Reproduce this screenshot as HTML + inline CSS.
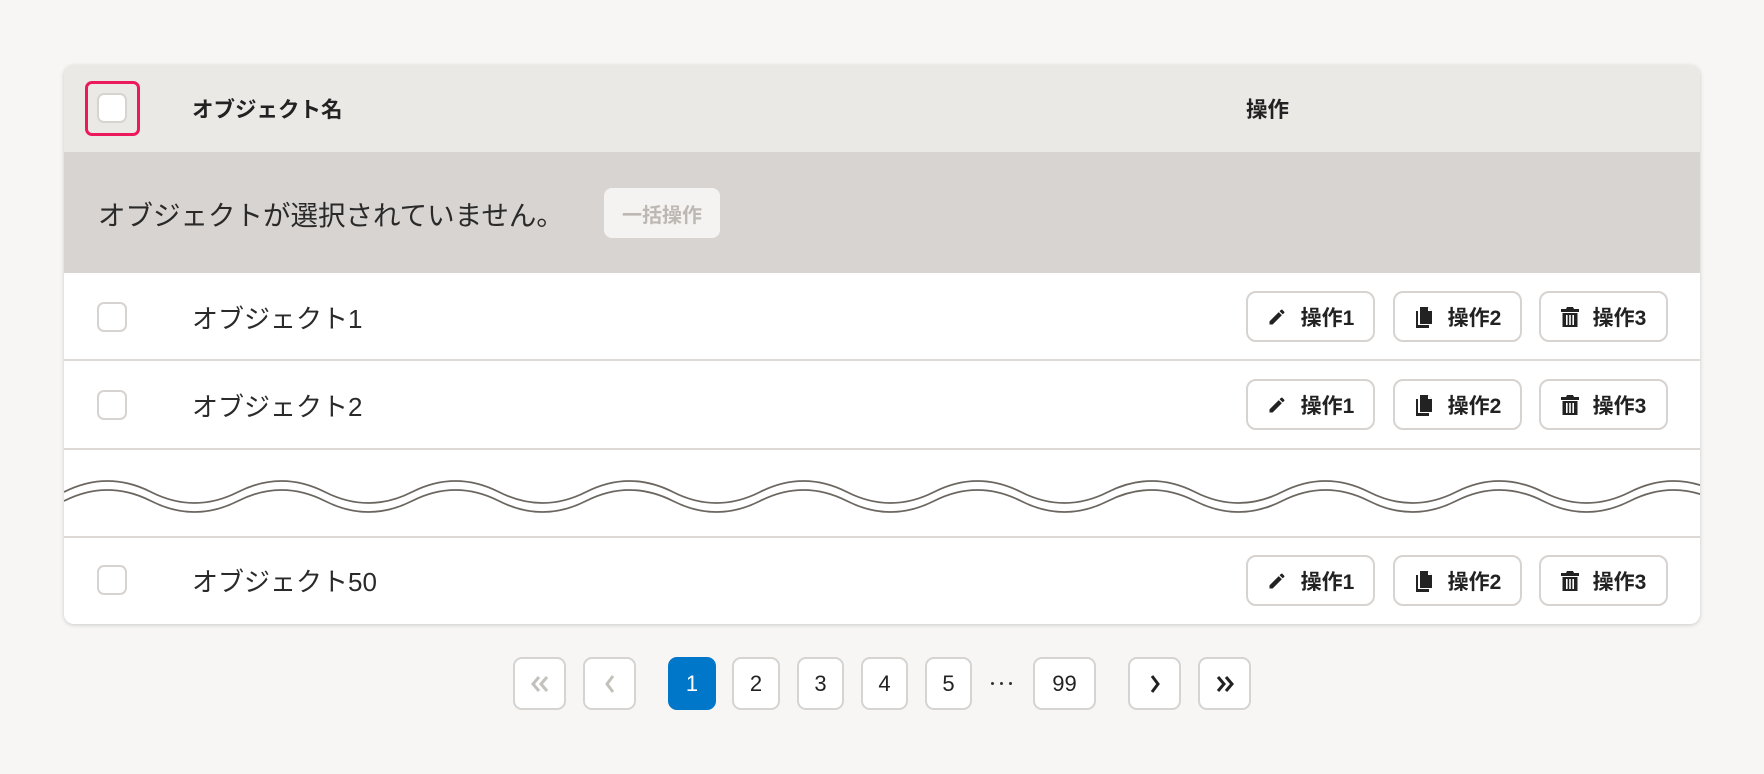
<!DOCTYPE html>
<html><head><meta charset="utf-8"><style>
*{box-sizing:border-box;margin:0;padding:0}
body{width:1764px;height:774px;background:#f7f6f4;font-family:"Liberation Sans","Noto Sans CJK JP",sans-serif;color:#222;position:relative;overflow:hidden}
.card{position:absolute;left:64px;top:65px;width:1636px;height:559px;background:#fff;border-radius:10px;box-shadow:0 1px 4px rgba(0,0,0,.18);overflow:hidden}
.abs{position:absolute}
.hdr{left:0;top:0;width:100%;height:87px;background:#ebe9e6}
.cb{position:absolute;width:30px;height:30px;border:2px solid #d6d3d0;border-radius:7px;background:#fff}
.focus{position:absolute;left:21px;top:16px;width:55px;height:55px;border:3px solid #ec1a5c;border-radius:7px}
.bar{left:0;top:87px;width:100%;height:121px;background:#d8d4d1}
.row{left:0;width:100%;border-bottom:2px solid #dcd9d6}
.txt{position:absolute;left:128px;font-size:26px;color:#2a2a2a}
.btn{position:absolute;height:51px;width:129px;border:2px solid #d6d3d0;border-radius:10px;background:#fff;display:flex;align-items:center;justify-content:center;gap:14px;font-weight:bold;font-size:21px;color:#222}
.pg{position:absolute;top:657px;height:53px;border:2px solid #d6d3d0;border-radius:9px;background:#fff;display:flex;align-items:center;justify-content:center;font-size:22px;color:#222}
</style></head><body>
<div class="card">
  <div class="abs hdr">
    <div class="focus"></div>
    <div class="cb" style="left:33px;top:28px"></div>
    <div class="abs" style="left:128px;top:28px;font-size:21.5px;font-weight:bold">オブジェクト名</div>
    <div class="abs" style="left:1182px;top:28px;font-size:21.5px;font-weight:bold">操作</div>
  </div>
  <div class="abs bar">
    <div class="abs" style="left:34px;top:41px;font-size:27.5px;color:#2a2a2a">オブジェクトが選択されていません。</div>
    <div class="abs" style="left:540px;top:36px;width:116px;height:50px;background:#f5f3f1;border-radius:8px;color:#bdb8b3;font-weight:bold;font-size:20px;display:flex;align-items:center;justify-content:center">一括操作</div>
  </div>
  <div class="abs row" style="top:208px;height:88px"></div>
  <div class="abs row" style="top:296px;height:89px"></div>
  <div class="abs row" style="top:385px;height:88px"></div>
  <svg class="abs" style="left:0;top:385px" width="1636" height="88" viewBox="0 0 1636 88">
    <path d="M0,42 q43.5,-22 87,0 t87,0 t87,0 t87,0 t87,0 t87,0 t87,0 t87,0 t87,0 t87,0 t87,0 t87,0 t87,0 t87,0 t87,0 t87,0 t87,0 t87,0 t87,0" fill="none" stroke="#6b6660" stroke-width="1.8"/>
    <path d="M0,51 q43.5,-22 87,0 t87,0 t87,0 t87,0 t87,0 t87,0 t87,0 t87,0 t87,0 t87,0 t87,0 t87,0 t87,0 t87,0 t87,0 t87,0 t87,0 t87,0 t87,0" fill="none" stroke="#6b6660" stroke-width="1.8"/>
  </svg>
  <div class="cb" style="left:33px;top:237px"></div>
  <div class="txt" style="top:234px">オブジェクト1</div>
  <div class="cb" style="left:33px;top:325px"></div>
  <div class="txt" style="top:322px">オブジェクト2</div>
  <div class="cb" style="left:33px;top:500px"></div>
  <div class="txt" style="top:497px">オブジェクト50</div>
</div>
<div id="btns"></div>
<script>
var tops=[291,379,555],h='';
var pen='<svg width="20" height="20" viewBox="0 0 24 24"><path d="M3 17.25V21h3.75L17.8 9.94l-3.75-3.75L3 17.25zM20.7 7.04a1 1 0 000-1.41l-2.34-2.34a1 1 0 00-1.41 0l-1.83 1.83 3.75 3.75 1.83-1.83z" fill="#222"/></svg>';
var copy='<svg width="20" height="22" viewBox="0 0 20 22"><path d="M2 5h2v14h11v3H2z" fill="#222"/><path d="M6 1h8l4 4v13H6z" fill="#222"/><path d="M14 1v4h4" fill="#fff"/></svg>';
var trash='<svg width="18" height="20" viewBox="0 0 18 20"><path d="M0 2h5l1-2h6l1 2h5v3H0z" fill="#222"/><path d="M1.5 6h15v14h-15z" fill="#222"/><path d="M5 8h1.6v10H5zM8.2 8h1.6v10H8.2zM11.4 8h1.6v10h-1.6z" fill="#fff"/></svg>';
tops.forEach(function(t){
 h+='<div class="btn" style="left:1246px;top:'+t+'px">'+pen+'<span>操作1</span></div>';
 h+='<div class="btn" style="left:1393px;top:'+t+'px">'+copy+'<span>操作2</span></div>';
 h+='<div class="btn" style="left:1539px;top:'+t+'px">'+trash+'<span>操作3</span></div>';
});
document.getElementById('btns').innerHTML=h;
</script>
<div class="pg" style="left:513px;width:53px"><svg width="20" height="18" viewBox="0 0 20 18"><path d="M9 2L3 9l6 7M17 2l-6 7 6 7" stroke="#c4c0bb" stroke-width="3" fill="none"/></svg></div>
<div class="pg" style="left:583px;width:53px"><svg width="12" height="20" viewBox="0 0 12 20"><path d="M9 2L3 10l6 8" stroke="#c4c0bb" stroke-width="3" fill="none"/></svg></div>
<div class="pg" style="left:668px;width:48px;background:#0077c8;border-color:#0077c8;color:#fff">1</div>
<div class="pg" style="left:732px;width:48px">2</div>
<div class="pg" style="left:797px;width:47px">3</div>
<div class="pg" style="left:861px;width:47px">4</div>
<div class="pg" style="left:925px;width:47px">5</div>
<div class="abs" style="left:991px;top:682px;width:30px;height:6px;display:flex;gap:6px"><i style="width:3px;height:3px;border-radius:2px;background:#333"></i><i style="width:3px;height:3px;border-radius:2px;background:#333"></i><i style="width:3px;height:3px;border-radius:2px;background:#333"></i></div>
<div class="pg" style="left:1033px;width:63px">99</div>
<div class="pg" style="left:1128px;width:53px"><svg width="12" height="20" viewBox="0 0 12 20"><path d="M3 2l6 8-6 8" stroke="#222" stroke-width="3" fill="none"/></svg></div>
<div class="pg" style="left:1198px;width:53px"><svg width="20" height="18" viewBox="0 0 20 18"><path d="M3 2l6 7-6 7M11 2l6 7-6 7" stroke="#222" stroke-width="3" fill="none"/></svg></div>
</body></html>
